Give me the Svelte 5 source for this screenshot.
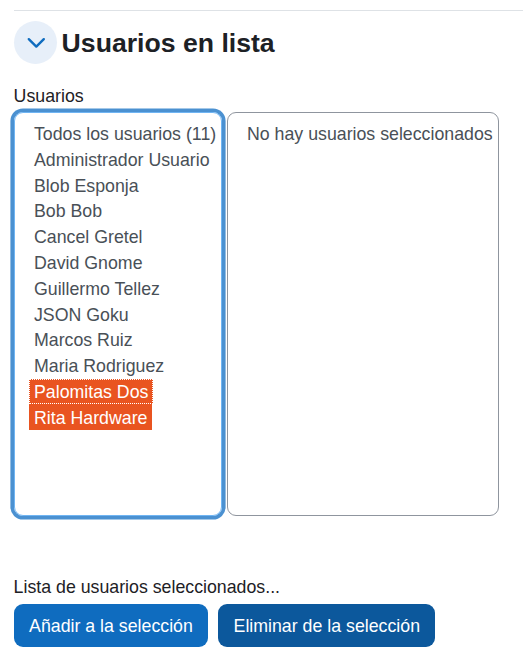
<script>
  const users = [
    'Todos los usuarios (11)',
    'Administrador Usuario',
    'Blob Esponja',
    'Bob Bob',
    'Cancel Gretel',
    'David Gnome',
    'Guillermo Tellez',
    'JSON Goku',
    'Marcos Ruiz',
    'Maria Rodriguez',
    'Palomitas Dos',
    'Rita Hardware'
  ];
  let selected = $state([10, 11]);
  const toggle = (i) => {
    selected = selected.includes(i) ? selected.filter((n) => n !== i) : [...selected, i];
  };
</script>

<main>
  <header>
    <button class="collapse" aria-label="Colapsar">
      <svg viewBox="0 0 43 43" width="43" height="43">
        <path d="M14.8 18.2 L22.3 25.6 L29.8 18.2" />
      </svg>
    </button>
    <h3>Usuarios en lista</h3>
  </header>

  <p class="label">Usuarios</p>
  <div class="lists">
    <ul class="list focused" role="listbox" aria-multiselectable="true">
      {#each users as user, i}
        <li role="option" aria-selected={selected.includes(i)}>
          <button
            class="option"
            class:selected={selected.includes(i)}
            class:active={i === 10}
            onclick={() => toggle(i)}>{user}</button>
        </li>
      {/each}
    </ul>
    <ul class="list">
      <li><span class="option">No hay usuarios seleccionados</span></li>
    </ul>
  </div>

  <p class="label second">Lista de usuarios seleccionados...</p>
  <div class="actions">
    <button class="btn add">Añadir a la selección</button>
    <button class="btn remove">Eliminar de la selección</button>
  </div>
</main>

<style>
  :global(body) {
    background: #fff;
    overflow: hidden;
  }
  main {
    box-sizing: border-box;
    height: 659px;
    padding: 10px 0 0 13.6px;
    font: 17.75px/27px 'Liberation Sans', Arial, sans-serif;
    color: #1d2125;
  }
  button {
    border: 0;
    padding: 0;
    font: inherit;
    color: inherit;
    background: none;
  }
  header {
    display: flex;
    align-items: center;
    gap: 5px;
    padding-top: 10px;
    border-top: 1px solid #dee2e6;
  }
  .collapse {
    width: 43px;
    height: 43px;
    border-radius: 50%;
    background: #e7eff9;
  }
  .collapse svg {
    display: block;
    fill: none;
    stroke: #0f6cbf;
    stroke-width: 2.4;
    stroke-linecap: round;
    stroke-linejoin: round;
  }
  h3 {
    margin: 0;
    font-size: 26.63px;
    line-height: 32px;
    font-weight: 700;
  }
  .label {
    margin: 19px 0 2px;
    line-height: 27px;
    white-space: nowrap;
  }
  .lists {
    display: flex;
    gap: 5px;
    margin-left: 0.4px;
  }
  .list {
    box-sizing: border-box;
    width: 272px;
    height: 404px;
    margin: 0;
    padding: 8.05px 0 0 14px;
    list-style: none;
    border: 1px solid #8f959e;
    border-radius: 9px;
    color: #495057;
    white-space: nowrap;
  }
  .list.focused {
    width: 208px;
    border-color: #70b5f3;
    box-shadow: 0 0 0 3.6px #4b91d1;
  }
  li {
    height: 25.8px;
    display: flex;
  }
  .option {
    box-sizing: border-box;
    height: 25.8px;
    padding: 1px 5px 0;
    line-height: 25.8px;
  }
  .selected {
    width: 123px;
    height: 26px;
    margin-top: -0.8px;
    padding-top: 1.8px;
    text-align: left;
    color: #fff;
    background: #e95420;
  }
  .active {
    width: 124px;
    height: 25px;
    margin-top: 0;
    padding-top: 1px;
    outline: 1px dotted #fff;
    outline-offset: -1px;
  }
  .second {
    margin: 58px 0 3px;
  }
  .actions {
    display: flex;
    gap: 10px;
    margin-left: 0.4px;
  }
  .btn {
    width: 194px;
    height: 43px;
    padding-top: 1px;
    border-radius: 9px;
    color: #fff;
    background: #0f6cbf;
    white-space: nowrap;
  }
  .remove {
    width: 217px;
    padding-left: 0.6px;
    background: #0c589c;
  }
</style>
